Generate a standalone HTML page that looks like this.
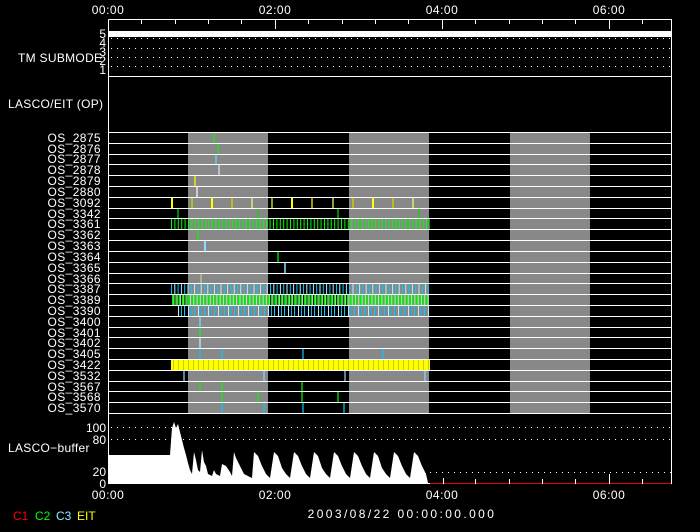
<!DOCTYPE html>
<html><head><meta charset="utf-8"><style>
html,body{margin:0;padding:0;background:#000;width:700px;height:532px;overflow:hidden}
svg{display:block}
text{font-family:"Liberation Sans",sans-serif;font-size:12px;fill:#fff}
</style></head><body>
<svg width="700" height="532" viewBox="0 0 700 532" xmlns="http://www.w3.org/2000/svg">
<defs>
<pattern id="pg" x="171" y="0" width="3.4" height="20" patternUnits="userSpaceOnUse"><rect x="0" y="0" width="1" height="20" fill="#0f0"/></pattern>
<pattern id="pc" x="171" y="0" width="6.6" height="20" patternUnits="userSpaceOnUse"><rect x="0" y="0" width="1" height="20" fill="#0cf"/><rect x="3.3" y="0" width="1" height="20" fill="#bef"/></pattern>
<pattern id="pg2" x="172" y="0" width="3.3" height="20" patternUnits="userSpaceOnUse"><rect x="0" y="0" width="1.6" height="20" fill="#0e0"/><rect x="1.6" y="0" width="0.8" height="20" fill="#cfc"/></pattern>
<pattern id="pc2" x="174" y="0" width="10" height="20" patternUnits="userSpaceOnUse"><rect x="0" y="0" width="1" height="20" fill="#0cf"/><rect x="4" y="0" width="1" height="20" fill="#bef"/><rect x="7" y="0" width="1" height="20" fill="#0bf"/></pattern>
<pattern id="py" x="171" y="0" width="5" height="20" patternUnits="userSpaceOnUse"><rect x="0" y="0" width="5" height="20" fill="#ff0"/><rect x="2" y="0" width="1" height="20" fill="#cc0"/></pattern>
</defs>
<text x="108" y="14" text-anchor="middle" letter-spacing="0.5">00:00</text>
<text x="275" y="14" text-anchor="middle" letter-spacing="0.5">02:00</text>
<text x="442" y="14" text-anchor="middle" letter-spacing="0.5">04:00</text>
<text x="609" y="14" text-anchor="middle" letter-spacing="0.5">06:00</text>
<path d="M108.5 19.5H671.5V484M108.5 19.5V484" stroke="#fff" fill="none"/>
<g stroke="#fff">
<path d="M141.5 19v5M175.5 19v5M208.5 19v5M241.5 19v5M308.5 19v5M342.5 19v5M375.5 19v5M408.5 19v5M475.5 19v5M509.5 19v5M542.5 19v5M575.5 19v5M642.5 19v5M275.5 19v10M442.5 19v10M609.5 19v10"/>
</g>
<rect x="109" y="31" width="562" height="6" fill="#fff"/>
<g stroke="#fff" stroke-dasharray="1 5">
<line x1="111" y1="38.5" x2="671" y2="38.5"/>
<line x1="111" y1="48.5" x2="671" y2="48.5"/>
<line x1="111" y1="57.5" x2="671" y2="57.5"/>
<line x1="111" y1="66.5" x2="671" y2="66.5"/>
</g>
<text x="18" y="62" letter-spacing="0.3">TM SUBMODE</text>
<text x="106" y="38" text-anchor="end" font-size="10">5</text>
<text x="106" y="47" text-anchor="end" font-size="10">4</text>
<text x="106" y="56" text-anchor="end" font-size="10">3</text>
<text x="106" y="65" text-anchor="end" font-size="10">2</text>
<text x="106" y="74" text-anchor="end" font-size="10">1</text>
<line x1="108" y1="76.5" x2="671" y2="76.5" stroke="#fff"/>
<text x="8" y="108" letter-spacing="0.3">LASCO/EIT (OP)</text>
<g fill="#888">
<rect x="188" y="132" width="80" height="282"/>
<rect x="349" y="132" width="80" height="282"/>
<rect x="510" y="132" width="80" height="282"/>
</g>
<rect x="171" y="219" width="259" height="10" fill="url(#pg)"/>
<rect x="171" y="284" width="258" height="10" fill="url(#pc)"/>
<rect x="172" y="295" width="257" height="10" fill="url(#pg2)"/>
<rect x="176" y="306" width="253" height="10" fill="url(#pc2)"/>
<rect x="171" y="360" width="259" height="10" fill="url(#py)"/>
<g stroke-width="1.2">
<path d="M214 133v10" stroke="#0f0"/>
<path d="M218 144v10" stroke="#0f0"/>
<path d="M216 154v10" stroke="#6df"/>
<path d="M219 165v10" stroke="#cef"/>
<path d="M195 176v10" stroke="#ff0"/>
<path d="M197 187v10" stroke="#fff"/>
<path d="M172 198v10M212 198v10M292 198v10M373 198v10" stroke="#ff0" stroke-width="2"/>
<path d="M192 198v10M232 198v10M272 198v10M312 198v10M353 198v10M393 198v10" stroke="#cc0" stroke-width="1.5"/>
<path d="M252 198v10M333 198v10M413 198v10" stroke="#ff6"/>
<path d="M178 209v10M258 209v10M338 209v10M419 209v10" stroke="#0d0"/>
<path d="M198 230v10" stroke="#0f0"/>
<path d="M205 241v10" stroke="#8df" stroke-width="2"/>
<path d="M278 252v10" stroke="#0f0"/>
<path d="M285 263v10" stroke="#8df" stroke-width="1.5"/>
<path d="M201 273v10" stroke="#cc8"/>
<path d="M200 317v10" stroke="#8df"/>
<path d="M200 328v10" stroke="#0f0"/>
<path d="M200 338v10" stroke="#cef"/>
<path d="M200 349v10M222 349v10M303 349v10M383 349v10" stroke="#0cf"/>
<path d="M184 371v10M264 371v10M345 371v10M425 371v10" stroke="#8df"/>
<path d="M200 382v10M222 382v10M302 382v10" stroke="#0f0"/>
<path d="M222 392v10M258 392v10M302 392v10M338 392v10" stroke="#0f0"/>
<path d="M222 403v10M264 403v10M303 403v10M344 403v10" stroke="#0cf"/>
</g>
<g stroke="#fff">
<path d="M108 132.5H671M108 143.5H671M108 154.5H671M108 164.5H671M108 175.5H671M108 186.5H671M108 197.5H671M108 208.5H671M108 218.5H671M108 229.5H671M108 240.5H671M108 251.5H671M108 262.5H671M108 273.5H671M108 283.5H671M108 294.5H671M108 305.5H671M108 316.5H671M108 327.5H671M108 337.5H671M108 348.5H671M108 359.5H671M108 370.5H671M108 381.5H671M108 391.5H671M108 402.5H671M108 413.5H671"/>
</g>
<g text-anchor="end" font-size="12" letter-spacing="0.4">
<text x="101" y="142">OS_2875</text><text x="101" y="153">OS_2876</text><text x="101" y="163">OS_2877</text><text x="101" y="174">OS_2878</text><text x="101" y="185">OS_2879</text><text x="101" y="196">OS_2880</text><text x="101" y="207">OS_3092</text><text x="101" y="218">OS_3342</text><text x="101" y="228">OS_3361</text><text x="101" y="239">OS_3362</text><text x="101" y="250">OS_3363</text><text x="101" y="261">OS_3364</text><text x="101" y="272">OS_3365</text><text x="101" y="283">OS_3366</text><text x="101" y="293">OS_3387</text><text x="101" y="304">OS_3389</text><text x="101" y="315">OS_3390</text><text x="101" y="326">OS_3400</text><text x="101" y="337">OS_3401</text><text x="101" y="347">OS_3402</text><text x="101" y="358">OS_3405</text><text x="101" y="369">OS_3422</text><text x="101" y="380">OS_3532</text><text x="101" y="391">OS_3567</text><text x="101" y="401">OS_3568</text><text x="101" y="412">OS_3570</text>
</g>
<g stroke="#fff" stroke-dasharray="1 5">
<line x1="111" y1="427.5" x2="671" y2="427.5"/>
<line x1="111" y1="439.5" x2="671" y2="439.5"/>
<line x1="430" y1="472.5" x2="671" y2="472.5"/>
</g>
<text x="8" y="452" letter-spacing="0.3">LASCO−buffer</text>
<text x="106" y="432" text-anchor="end">100</text>
<text x="106" y="444" text-anchor="end">80</text>
<text x="106" y="476" text-anchor="end">20</text>
<text x="106" y="488" text-anchor="end">0</text>
<path fill="#fff" d="M109 483V455H170L172 428L174 422L176 428L178 424L180 432L182 440L184 448L186 455L188 463L190 470L192 474L194 452L196 460L198 470L200 472L202 450L204 462L206 466L208 474L212 476L214 470L216 474L220 476L222 464L226 466L230 472L232 476L234 452L236 458L240 466L244 474L248 476L252 478L254 452L258 456L262 466L266 474L270 478L274 452L278 456L282 468L286 474L290 478L294 452L298 456L302 466L306 474L310 478L314 452L318 456L322 468L326 474L330 478L334 452L338 456L342 466L346 474L350 478L354 452L358 456L362 466L366 474L370 478L374 452L378 456L382 468L386 474L390 478L394 452L398 456L402 466L406 474L410 478L414 452L418 456L422 466L426 474L428 483Z"/>
<path d="M671.5 414V484" stroke="#fff"/>
<path d="M430 483.5H671" stroke="#e00"/>
<path d="M108 483.5H430" stroke="#fff"/>
<g stroke="#fff"><path d="M443.5 478v6M475.5 479v5M509.5 479v5M542.5 479v5M575.5 479v5M609.5 474v10M642.5 479v5"/></g>
<text x="108" y="499" text-anchor="middle" letter-spacing="0.5">00:00</text>
<text x="275" y="499" text-anchor="middle" letter-spacing="0.5">02:00</text>
<text x="442" y="499" text-anchor="middle" letter-spacing="0.5">04:00</text>
<text x="609" y="499" text-anchor="middle" letter-spacing="0.5">06:00</text>
<text x="402" y="518" text-anchor="middle" font-size="13" letter-spacing="2.4">2003/08/22 00:00:00.000</text>
<g font-size="10">
<text x="13" y="520" style="fill:#f00">C1</text>
<text x="35" y="520" style="fill:#0f0">C2</text>
<text x="56" y="520" style="fill:#8ef">C3</text>
<text x="77" y="520" style="fill:#ff0">EIT</text>
</g>
</svg>
</body></html>
